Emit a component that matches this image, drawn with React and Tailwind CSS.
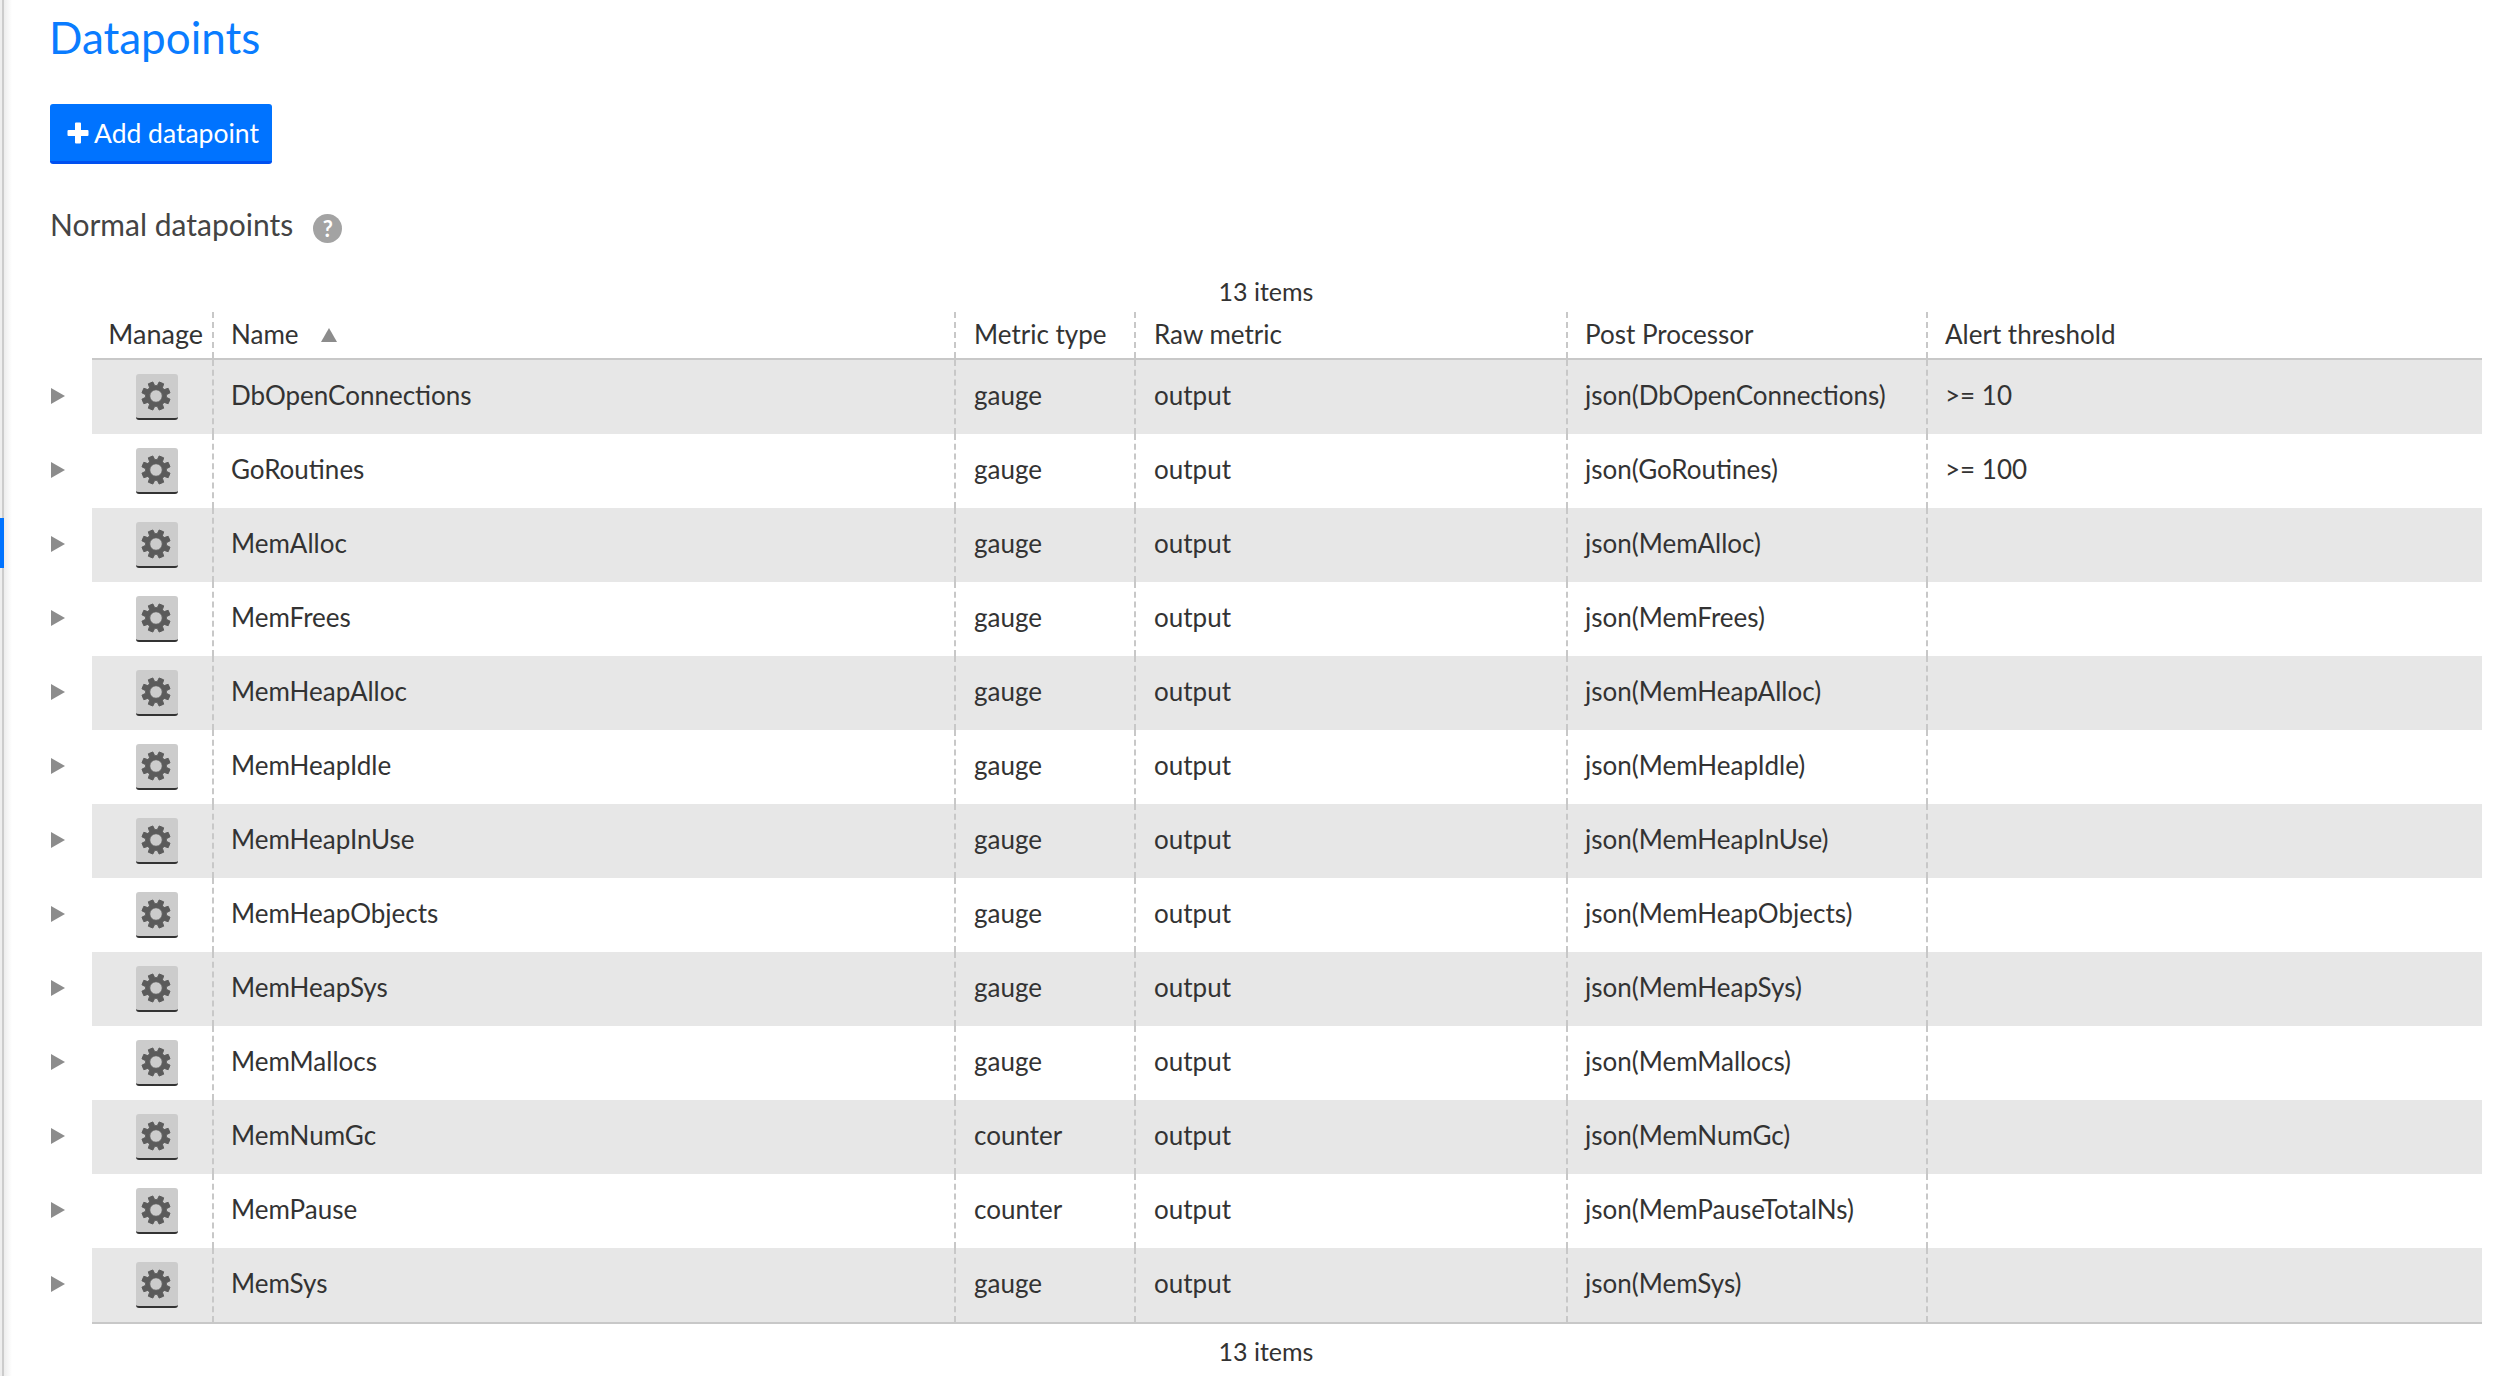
const rows = [
  ["DbOpenConnections", "gauge", "json(DbOpenConnections)", ">= 10"],
  ["GoRoutines", "gauge", "json(GoRoutines)", ">= 100"],
  ["MemAlloc", "gauge", "json(MemAlloc)", ""],
  ["MemFrees", "gauge", "json(MemFrees)", ""],
  ["MemHeapAlloc", "gauge", "json(MemHeapAlloc)", ""],
  ["MemHeapIdle", "gauge", "json(MemHeapIdle)", ""],
  ["MemHeapInUse", "gauge", "json(MemHeapInUse)", ""],
  ["MemHeapObjects", "gauge", "json(MemHeapObjects)", ""],
  ["MemHeapSys", "gauge", "json(MemHeapSys)", ""],
  ["MemMallocs", "gauge", "json(MemMallocs)", ""],
  ["MemNumGc", "counter", "json(MemNumGc)", ""],
  ["MemPause", "counter", "json(MemPauseTotalNs)", ""],
  ["MemSys", "gauge", "json(MemSys)", ""],
];

function gearPath() {
  const teeth = 8;
  const pts = [];
  for (let i = 0; i < teeth; i++) {
    const a = (i * 2 * Math.PI) / teeth + Math.PI / 8;
    const w = 0.17;
    [[-0.27, 10.4], [-w, 14.4], [w, 14.4], [0.27, 10.4]].forEach(([da, r]) => {
      pts.push([15 + r * Math.sin(a + da), 15 - r * Math.cos(a + da)]);
    });
  }
  const outer = "M" + pts.map((p) => p[0].toFixed(2) + " " + p[1].toFixed(2)).join("L") + "Z";
  return outer + "M15 8.7a6.3 6.3 0 1 0 0 12.6a6.3 6.3 0 1 0 0-12.6Z";
}

function Gear() {
  return (
    <svg viewBox="0 0 30 30" className="w-[30px] h-[30px] ml-[-2px]">
      <path d={gearPath()} fill="#5b5b5b" stroke="#5b5b5b" strokeWidth="1" strokeLinejoin="round" fillRule="evenodd" />
    </svg>
  );
}

function ManageButton() {
  return (
    <div className="w-[42px] h-[46px] bg-[#cccccc] rounded-[3px] border-b-[2px] border-[#333333] flex items-center justify-center">
      <Gear />
    </div>
  );
}

function Arrow() {
  return (
    <svg viewBox="0 0 14 16" className="w-[14px] h-[16px]">
      <path d="M0 0L14 8L0 16Z" fill="#8c8c8c" />
    </svg>
  );
}

const divider = "border-l-2 border-dashed border-[#c8c8c8]";

function Row({ row, index }) {
  const [name, type, post, alert] = row;
  const bg = index % 2 === 0 ? "bg-[#e7e7e7]" : "bg-white";
  return (
    <div className="flex">
      <div className="w-[42px] h-[74px] flex items-center shrink-0 pl-[1px] pb-[2px]">
        <Arrow />
      </div>
      <div className={"flex flex-1 h-[74px] " + bg}>
        <div className="w-[120px] flex items-center justify-center pl-[9px]">
          <ManageButton />
        </div>
        <div className={"w-[742px] flex items-center pl-[17px] pb-[4px] " + divider}>{name}</div>
        <div className={"w-[180px] flex items-center pl-[18px] pb-[4px] " + divider}>{type}</div>
        <div className={"w-[432px] flex items-center pl-[18px] pb-[4px] " + divider}>output</div>
        <div className={"w-[360px] flex items-center pl-[17px] pb-[4px] " + divider}>{post}</div>
        <div className={"flex-1 flex items-center pl-[17px] pb-[4px] " + divider}>{alert}</div>
      </div>
    </div>
  );
}

export default function App() {
  return (
    <div className="relative h-[1376px] overflow-hidden bg-white text-[26px] text-[#333333] font-['Lato','Liberation_Sans',sans-serif]">
      {/* sidebar edge */}
      <div className="absolute left-0 top-0 bottom-0 w-[2px] bg-[#eeeeee]" />
      <div className="absolute left-[2px] top-0 bottom-0 w-[2px] bg-[#cccccc]" />
      <div className="absolute left-[4px] top-0 bottom-0 w-[8px] bg-gradient-to-r from-[#ededed] to-white" />
      <div className="absolute left-0 top-[518px] w-[4px] h-[50px] bg-[#0073ff]" />

      <div className="pl-[50px] pr-[30px]">
        <h1 className="h-[76px] pt-[11px] ml-[-1px] text-[44px] leading-[52px] text-[#0a7cff]">Datapoints</h1>
        <button className="mt-[28px] w-[222px] h-[60px] bg-[#0073ff] border-b-[3px] border-[#0050f0] rounded-[3px] text-white text-[26.5px] flex items-center pl-[17px] gap-[5px]">
          <svg viewBox="0 0 22 22" className="w-[22px] h-[22px]">
            <path d="M8 1.5a1 1 0 0 1 1-1h4a1 1 0 0 1 1 1V8h6.5a1 1 0 0 1 1 1v4a1 1 0 0 1-1 1H14v6.5a1 1 0 0 1-1 1H9a1 1 0 0 1-1-1V14H1.5a1 1 0 0 1-1-1V9a1 1 0 0 1 1-1H8Z" fill="#fff" />
          </svg>
          <span className="pt-[2px]">Add datapoint</span>
        </button>
        <div className="mt-[38px] h-[44px] flex items-center gap-[20px] text-[30px] text-[#444444]">
          Normal datapoints
          <span className="w-[29px] h-[29px] mt-[8px] rounded-full bg-[#a3a3a3] text-white text-[22px] font-bold flex items-center justify-center">?</span>
        </div>

        <div className="mt-[22px] h-[44px] pt-[4px] text-[25px] flex items-center justify-center">13 items</div>

        <div className="flex ml-[42px] h-[46px] border-b-[2px] border-[#c8c8c8] box-content">
          <div className="w-[120px] flex items-center justify-end pr-[9px] pb-[2px] text-[27px]">Manage</div>
          <div className={"w-[742px] flex items-center pl-[17px] pb-[2px] gap-[22px] " + divider}>
            Name
            <svg viewBox="0 0 16 14" className="w-[16px] h-[14px] mt-[2px]">
              <path d="M8 0L16 14H0Z" fill="#8c8c8c" />
            </svg>
          </div>
          <div className={"w-[180px] flex items-center pl-[18px] pb-[2px] " + divider}>Metric type</div>
          <div className={"w-[432px] flex items-center pl-[18px] pb-[2px] " + divider}>Raw metric</div>
          <div className={"w-[360px] flex items-center pl-[17px] pb-[2px] " + divider}>Post Processor</div>
          <div className={"flex-1 flex items-center pl-[17px] pb-[2px] " + divider}>Alert threshold</div>
        </div>

        {rows.map((row, i) => (
          <Row key={row[0]} row={row} index={i} />
        ))}

        <div className="ml-[42px] border-t-[2px] border-[#c8c8c8]" />
        <div className="h-[56px] text-[25px] flex items-center justify-center">13 items</div>
      </div>
    </div>
  );
}
